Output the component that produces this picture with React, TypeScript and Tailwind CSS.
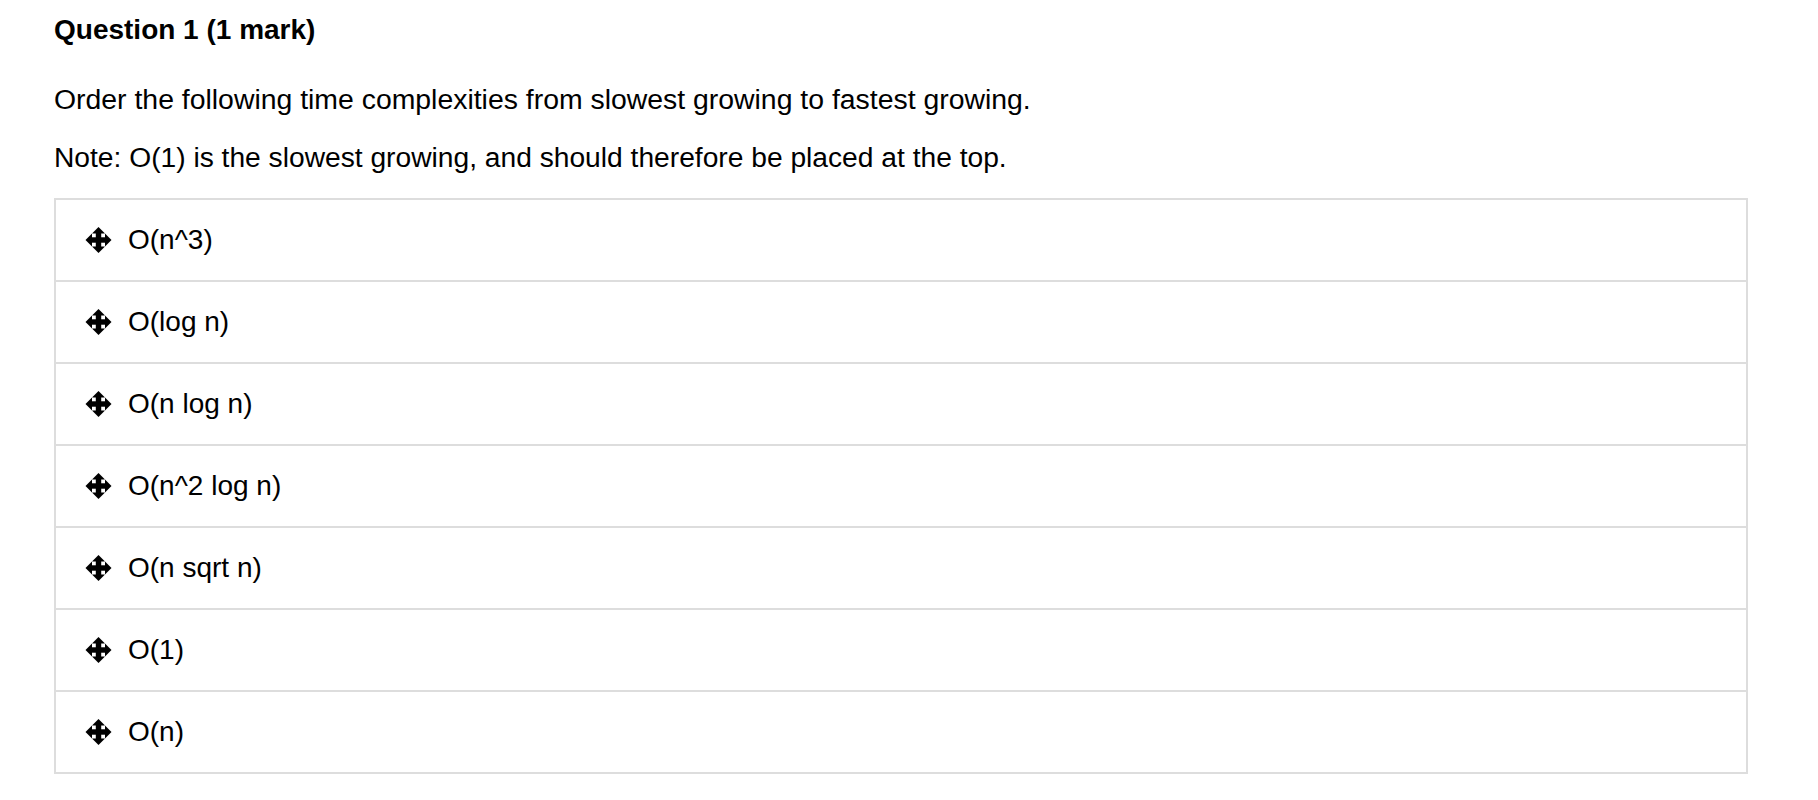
import React from "react";

const ITEMS = ["O(n^3)", "O(log n)", "O(n log n)", "O(n^2 log n)", "O(n sqrt n)", "O(1)", "O(n)"];

// move handle: four big arrowheads on a thick cross, diamond outline
function MoveIcon() {
  return (
    <svg width="27" height="26" viewBox="0 0 24 24" className="shrink-0" fill="#000">
      <rect x="4" y="9.5" width="16" height="5" />
      <rect x="9.5" y="4" width="5" height="16" />
      <polygon points="12,0 18,6 6,6" />
      <polygon points="12,24 18,18 6,18" />
      <polygon points="0,12 6,6 6,18" />
      <polygon points="24,12 18,6 18,18" />
    </svg>
  );
}

export default function App() {
  return (
    <div
      className="min-h-[800px] bg-white pl-[54px] pr-[70px] pt-[14px] text-black"
      style={{ fontFamily: '"Liberation Sans", Arial, Helvetica, sans-serif' }}
    >
      <h1 className="text-[28px] font-bold leading-[32px]">Question 1 (1 mark)</h1>
      <p className="mt-[37px] text-[28.4px] leading-[32px]">
        Order the following time complexities from slowest growing to fastest growing.
      </p>
      <p className="mt-[26px] text-[28.2px] leading-[32px]">
        Note: O(1) is the slowest growing, and should therefore be placed at the top.
      </p>

      <div className="mt-[25px] border-2 border-[#dddddd]">
        {ITEMS.map((item, i) => (
          <div
            key={item}
            className={
              "box-content flex h-[80px] items-center gap-[16px] pl-[29px] " +
              (i > 0 ? "border-t-2 border-[#dddddd]" : "")
            }
          >
            <MoveIcon />
            <span className="text-[28px] leading-[32px]">{item}</span>
          </div>
        ))}
      </div>
    </div>
  );
}
